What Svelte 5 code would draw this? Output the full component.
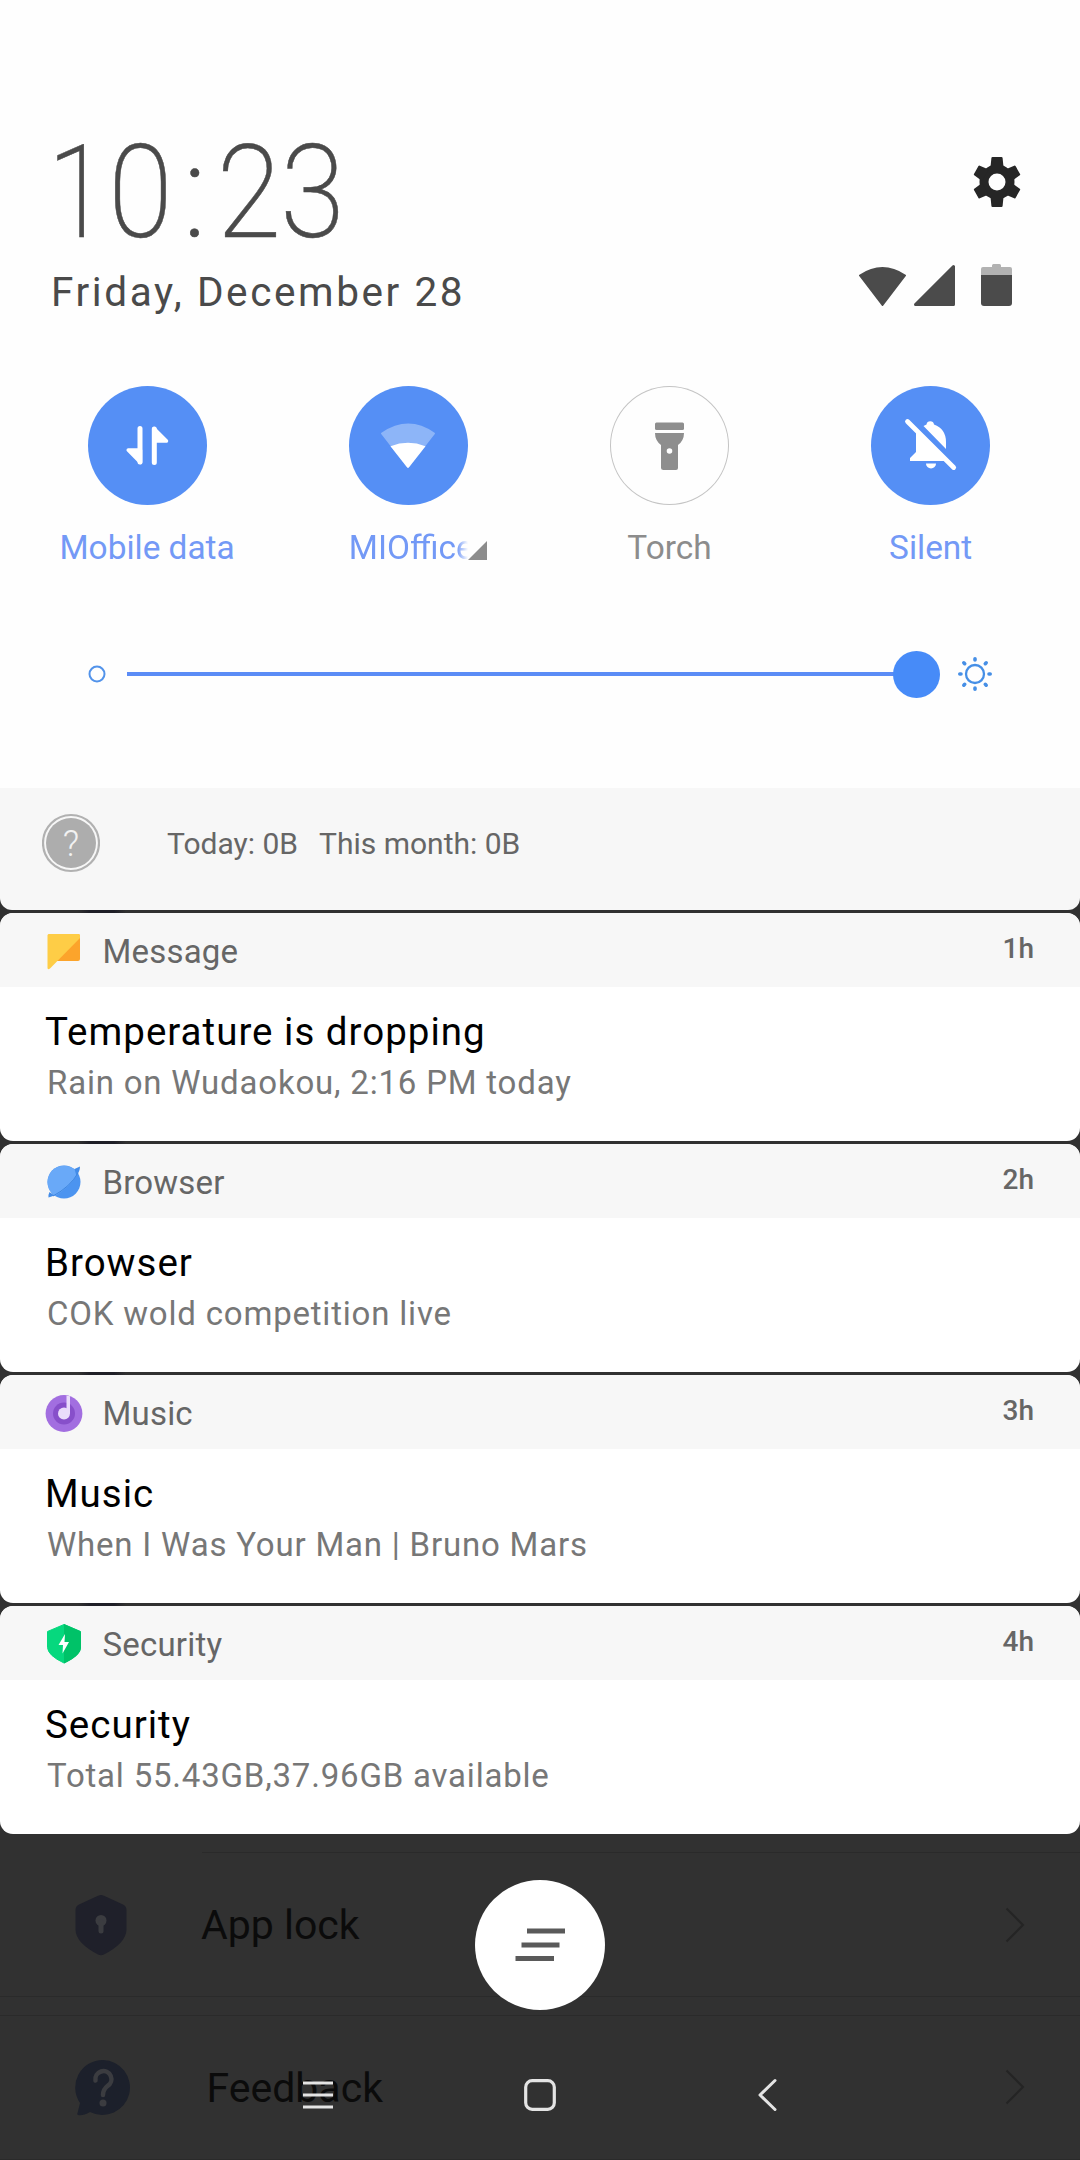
<script>
  const tiles = [
    { id: 'data', label: 'Mobile data', on: true },
    { id: 'wifi', label: 'MIOffice', on: true, expandable: true },
    { id: 'torch', label: 'Torch', on: false },
    { id: 'silent', label: 'Silent', on: true }
  ];

  const cards = [
    { id: 'message', app: 'Message', age: '1h', title: 'Temperature is dropping', text: 'Rain on Wudaokou, 2:16 PM today' },
    { id: 'browser', app: 'Browser', age: '2h', title: 'Browser', text: 'COK wold competition live' },
    { id: 'music', app: 'Music', age: '3h', title: 'Music', text: 'When I Was Your Man | Bruno Mars' },
    { id: 'security', app: 'Security', age: '4h', title: 'Security', text: 'Total 55.43GB,37.96GB available' }
  ];
</script>

<main class="screen">
  <section class="panel">
    <header class="top">
      <div class="when">
        <div class="clock"><span class="one">1</span><span class="zero">0</span><span class="colon">:</span><span class="two">2</span><span class="three">3</span></div>
        <div class="date">Friday, December 28</div>
      </div>
      <div class="side">
        <svg class="gear" width="50" height="52" viewBox="-25 -26 50 52">
          <defs>
            <path id="tooth" d="M-6.6 -14L-5.6 -24Q-5.5 -25 -4.5 -25H4.5Q5.5 -25 5.6 -24L6.6 -14Z" />
          </defs>
          <g fill="#262626">
            <circle r="13" fill="none" stroke="#262626" stroke-width="9" />
            <use href="#tooth" />
            <use href="#tooth" transform="rotate(60) scale(1 0.960)" />
            <use href="#tooth" transform="rotate(120) scale(1 0.960)" />
            <use href="#tooth" transform="rotate(180)" />
            <use href="#tooth" transform="rotate(240) scale(1 0.960)" />
            <use href="#tooth" transform="rotate(300) scale(1 0.960)" />
          </g>
        </svg>
        <svg class="status" width="154" height="43" viewBox="859 263 154 43">
          <path d="M860 275.500Q882.500 260.500 905 275.500L882.500 305Z" fill="#4b4b4b" stroke="#4b4b4b" stroke-width="2" stroke-linejoin="round" />
          <path d="M915.500 304.500L953.500 266.500V304.500Z" fill="#4b4b4b" stroke="#4b4b4b" stroke-width="3" stroke-linejoin="round" />
          <path d="M981 275V269Q981 267 983 267H992V265.500Q992 264 993.500 264H999.500Q1001 264 1001 265.500V267H1010Q1012 267 1012 269V275Z" fill="#b2b2b2" />
          <path d="M981 275H1012V303Q1012 306 1009 306H984Q981 306 981 303Z" fill="#4b4b4b" />
        </svg>
      </div>
    </header>

    <div class="tiles">
      {#each tiles as tile (tile.id)}
        <div class="tile" class:on={tile.on}>
          <div class="disc">
            <svg width="119" height="119" viewBox="0 0 119 119">
              {#if tile.id === 'data'}
                <path d="M52 42.500V76M66.300 43V76.500" stroke="#fff" stroke-width="5" stroke-linecap="round" fill="none" />
                <path d="M40.200 64L52.500 76.500V64ZM66 42.500L78.500 55H66Z" fill="#fff" stroke="#fff" stroke-width="3.500" stroke-linejoin="round" />
              {:else if tile.id === 'wifi'}
                <path d="M33 47.500Q59.500 29.500 85 47.500L59 81Z" fill="#8db5f8" stroke="#8db5f8" stroke-width="2" stroke-linejoin="round" />
                <path d="M41.500 60.200Q59 53.500 76.500 60.200L60 81.200Q59 82.400 58 81.200Z" fill="#fff" />
              {:else if tile.id === 'torch'}
                <rect x="45" y="36.500" width="29" height="7.500" rx="1.500" fill="#8e8e8e" />
                <path fill-rule="evenodd" d="M45 47H74Q74 54.500 68 59V82Q68 84 66 84H53.500Q51 84 51 82V59Q45 54.500 45 47ZM59.500 62.200A2.800 2.800 0 1 0 59.500 67.800A2.800 2.800 0 1 0 59.500 62.200Z" fill="#8e8e8e" />
              {:else}
                <path d="M52.500 40Q54 39.300 55.500 38.500A3.800 3.800 0 0 1 63 38.500Q75 43 75 56V63Z" fill="#fff" />
                <path d="M45 46L74 75H39V72L45 66Z" fill="#fff" />
                <path d="M55 77.500H65A5 5 0 0 1 55 77.500Z" fill="#fff" />
                <path d="M36.500 35.500L82.700 81.500" stroke="#fff" stroke-width="4.800" stroke-linecap="round" />
              {/if}
            </svg>
          </div>
          <div class="label">
            {#if tile.expandable}
              <span class="clip">{tile.label}</span><svg width="20" height="20" viewBox="0 0 20 20"><path d="M0 19L19 0V19Z" fill="#8c8c8c" /></svg>
            {:else}
              <span>{tile.label}</span>
            {/if}
          </div>
        </div>
      {/each}
    </div>

    <div class="slider">
      <svg class="dim" width="18" height="18" viewBox="-9 -9 18 18"><circle r="7.500" fill="none" stroke="#5293ea" stroke-width="2" /></svg>
      <div class="track"></div>
      <div class="knob"></div>
      <svg class="bright" width="36" height="36" viewBox="-18 -18 36 36">
        <g fill="none" stroke="#468fe6">
          <circle r="9" stroke-width="2.300" />
          <path d="M0 -15.200V-14M0 15.200V14M-15.200 0H-14M15.200 0H14M-11.200 -11.200L-10.300 -10.300M11.200 -11.200L10.300 -10.300M-11.200 11.200L-10.300 10.300M11.200 11.200L10.300 10.300" stroke-width="3.600" stroke-linecap="round" />
        </g>
      </svg>
    </div>
  </section>

  <section class="usage">
    <svg width="58" height="60" viewBox="-29 -30 58 60">
      <circle r="28" fill="none" stroke="#b1b1b1" stroke-width="2.200" />
      <circle r="25" fill="#adadad" />
      <text y="13" text-anchor="middle" fill="#f2f2f2" font-size="36" font-weight="300">?</text>
    </svg>
    <span class="today">Today: 0B</span>
    <span>This month: 0B</span>
  </section>

  {#each cards as card (card.id)}
    <article class="card">
      <header class="bar">
        <svg class="app-icon" width="38" height="40" viewBox="0 0 38 40">
          {#if card.id === 'message'}
            <path d="M3 5Q3 3 5 3H33Q35 3 35 5V28Q35 30 33 30H12Z" fill="#fca42b" />
            <path d="M2.500 4.500Q2.500 3 4 3H33.500Q35 3 35 5V7L5 37.500Q2.500 39 2.500 37Z" fill="#fecd46" />
          {:else if card.id === 'browser'}
            <circle cx="19" cy="20" r="16.500" fill="#4c94f0" />
            <path d="M10 34Q2.500 29 2.500 20A16.500 16.500 0 0 1 33 11.500Q25 25 10 34Z" fill="#69a9f8" />
            <path d="M29.500 7L35 4.500Q35 9 31.500 14ZM4.500 30Q3 33 3.500 35.500L9.500 33.500Z" fill="#438ce8" />
            <path d="M33 11Q25 25 8 34" stroke="#3e86e0" stroke-width="1" fill="none" />
          {:else if card.id === 'music'}
            <circle cx="19" cy="20.500" r="18.400" fill="#a26ee0" />
            <circle cx="19" cy="20.500" r="11" fill="#874fca" />
            <circle cx="19" cy="20.500" r="6" fill="#eadcfb" />
            <path d="M21.500 2.500L25 3.200V20.500H21.500Z" fill="#eadcfb" />
          {:else}
            <path d="M19 0.500L35.500 7.500V23.500Q35 31.500 19 39Q3 31.500 2.500 23.500V7.500Z" fill="#06d87e" stroke="#06d87e" stroke-linejoin="round" />
            <path d="M19 0L35 7Q36 7.500 36 8.500V23.500Q36 31.500 19 39.500Z" fill="#00c268" />
            <path d="M20 10L13.500 21H18L17.500 29.500L24 18H19.500Z" fill="#fff" />
          {/if}
        </svg>
        <span class="app">{card.app}</span>
        <span class="age">{card.age}</span>
      </header>
      <h2>{card.title}</h2>
      <p>{card.text}</p>
    </article>
  {/each}

  <section class="behind">
    <hr class="inset" />
    <div class="row lock">
      <svg width="52" height="62" viewBox="0 0 52 62">
        <path d="M23 1.800Q26 0 29 1.800L48 10.500Q51.500 12 51.500 16V36Q51 49 29 60.500Q26 62 23 60.500Q1 49 0.500 36V16Q0.500 12 4 10.500Z" fill="#1f202a" />
        <circle cx="26" cy="26.500" r="5.500" fill="#3b3c40" />
        <path d="M26 28V37" stroke="#3b3c40" stroke-width="5" stroke-linecap="round" />
      </svg>
      <span>App lock</span>
      <svg class="go" width="20" height="36" viewBox="0 0 20 36"><path d="M1.500 1.500L18 18L1.500 34.500" fill="none" stroke="#242424" stroke-width="2" /></svg>
    </div>
    <hr />
    <hr class="second" />
    <div class="row help">
      <svg width="56" height="58" viewBox="0 0 56 58">
        <path d="M28 1A27.500 27.500 0 1 1 15 53Q8 57 3 56Q2 56 2.500 54L5 44A27.500 27.500 0 0 1 28 1Z" fill="#1c202b" />
        <path d="M20.500 21.500A8 8 0 1 1 32.500 27Q28 30.500 28 36" fill="none" stroke="#3b3c40" stroke-width="4.500" stroke-linecap="round" />
        <circle cx="28" cy="44" r="3.500" fill="#3b3c40" />
      </svg>
      <span>Feedback</span>
      <svg class="go" width="20" height="36" viewBox="0 0 20 36"><path d="M1.500 1.500L18 18L1.500 34.500" fill="none" stroke="#242424" stroke-width="2" /></svg>
    </div>
    <hr />

    <div class="clear">
      <svg width="52" height="36" viewBox="514 1927 52 36">
        <path d="M527 1931H565M521.500 1945H559.500M515.500 1958.500H554" stroke="#5a5a5a" stroke-width="5" />
      </svg>
    </div>

    <nav>
      <svg width="32" height="34" viewBox="0 0 32 34"><path d="M1 5H31M1 17H31M1 29H31" stroke="#e4e4e4" stroke-width="3" /></svg>
      <svg class="home" width="34" height="34" viewBox="0 0 34 34"><rect x="2.700" y="2.700" width="28.600" height="28.600" rx="6.500" fill="none" stroke="#e4e4e4" stroke-width="3.200" /></svg>
      <svg width="32" height="34" viewBox="0 0 32 34"><path d="M23 2.500L8 17L23 31.500" fill="none" stroke="#e4e4e4" stroke-width="3" stroke-linecap="round" stroke-linejoin="round" /></svg>
    </nav>
  </section>
</main>

<style>
  :global(body) { margin: 0; background: #313131; }
  .screen {
    width: 1080px; height: 2160px; overflow: hidden; background: #313131;
    font-family: Roboto, "Liberation Sans", sans-serif;
    display: flex; flex-direction: column;
  }
  svg { display: block; flex: none; }

  .panel { height: 788px; flex: none; background: #fefefe; }
  .top { display: flex; justify-content: space-between; padding: 128px 58px 0 51px; box-sizing: border-box; height: 386px; }
  .clock { height: 130px; line-height: 130px; font-size: 130px; font-weight: 200; color: #4a4a4a; display: flex; -webkit-text-stroke: 0.500px #4a4a4a; }
  .clock span { display: block; text-align: center; transform: scaleX(0.900); }
  .clock .one { width: 73px; margin: 0 -16px 0 -4px; transform: scaleX(0.850); transform-origin: left; }
  .zero { width: 73px; }
  .clock .colon { width: 36px; transform: none; }
  .two { width: 72px; }
  .three { width: 73px; margin-left: -9px; }
  .date { margin-top: 9px; height: 50px; line-height: 50px; font-size: 40.500px; letter-spacing: 2.600px; color: #4a4a4a; white-space: nowrap; }
  .side { display: flex; flex-direction: column; align-items: flex-end; padding-top: 28px; }
  .status { margin: 55px 9px 0 0; }

  .tiles { display: grid; grid-template-columns: repeat(4, 261.200px); margin-left: 16.500px; height: 190px; }
  .tile { display: flex; flex-direction: column; align-items: center; color: #8c8c8c; }
  .disc { width: 119px; height: 119px; border-radius: 50%; box-sizing: border-box; box-shadow: inset 0 0 0 1px #c4c4c4; }
  .on { color: #7399f6; }
  .on .disc { background: #558ff5; box-shadow: none; }
  .label { margin-top: 23px; height: 40px; line-height: 40px; font-size: 33.400px; white-space: nowrap; display: flex; }
  .label svg { margin-top: 13px; }
  .clip { width: 119px; overflow: hidden; margin-left: 20px; -webkit-mask-image: linear-gradient(90deg, #000 108px, transparent 119px); mask-image: linear-gradient(90deg, #000 108px, transparent 119px); }

  .slider { display: flex; align-items: center; height: 48px; margin-top: 74px; padding-left: 87.500px; }
  .track { width: 774px; height: 4px; background: #5b8cf6; margin-left: 21.500px; }
  .knob { width: 47px; height: 47px; border-radius: 50%; background: #478bf8; margin-left: -8px; }
  .bright { margin-left: 17px; }

  .usage { height: 122px; flex: none; background: #f7f7f7; border-radius: 0 0 12px 12px; display: flex; align-items: center; box-sizing: border-box; padding: 0 0 12px 42px; font-size: 30px; color: #666; white-space: nowrap; }
  .today { margin: 0 21px 0 67px; }

  .card { position: relative; height: 228px; margin-top: 3px; flex: none; background: #fff; border-radius: 13px; }
  .card::before { content: ""; position: absolute; left: 78px; top: -3px; width: 48px; height: 3px; background: linear-gradient(90deg, transparent, #1f1f27 25%, #1f1f27 75%, transparent); }
  .bar { height: 74px; background: #f7f7f7; border-radius: 13px 13px 0 0; display: flex; align-items: center; padding: 0 46px 0 44.500px; color: #666; }
  .app-icon { margin-top: 2px; }
  .app { font-size: 33px; line-height: 40px; margin: 3px 0 0 20px; letter-spacing: 0.200px; }
  .age { margin: -2px 0 0 auto; font-size: 28px; font-weight: 500; line-height: 32px; }
  h2 { margin: 20px 0 0 45px; font-size: 38.500px; line-height: 50px; font-weight: 400; letter-spacing: 1px; color: #000; white-space: nowrap; }
  p { margin: 4px 0 0 47px; font-size: 33px; line-height: 44px; letter-spacing: 0.800px; color: #777; white-space: nowrap; }

  .behind { position: relative; flex: 1; padding-top: 18px; color: #0b0b0b; font-size: 41px; }
  hr { border: 0; height: 1px; margin: 0; background: #2a2a2a; }
  .inset { margin-left: 202px; }
  .second { margin-top: 18px; }
  .row { display: flex; align-items: center; height: 143px; padding: 0 55px 0 75px; }
  .row .go { margin-left: auto; }
  .lock span { margin: 1px 0 0 74px; }
  .help span { margin-left: 75.500px; }
  .help .go { margin-top: -2px; }
  .clear { position: absolute; left: 475px; top: 46px; width: 130px; height: 130px; border-radius: 50%; background: #fff; display: flex; align-items: center; justify-content: center; }
  nav { position: absolute; left: 302px; bottom: 48px; display: flex; }
  .home { margin: 0 195px 0 189px; }
</style>
